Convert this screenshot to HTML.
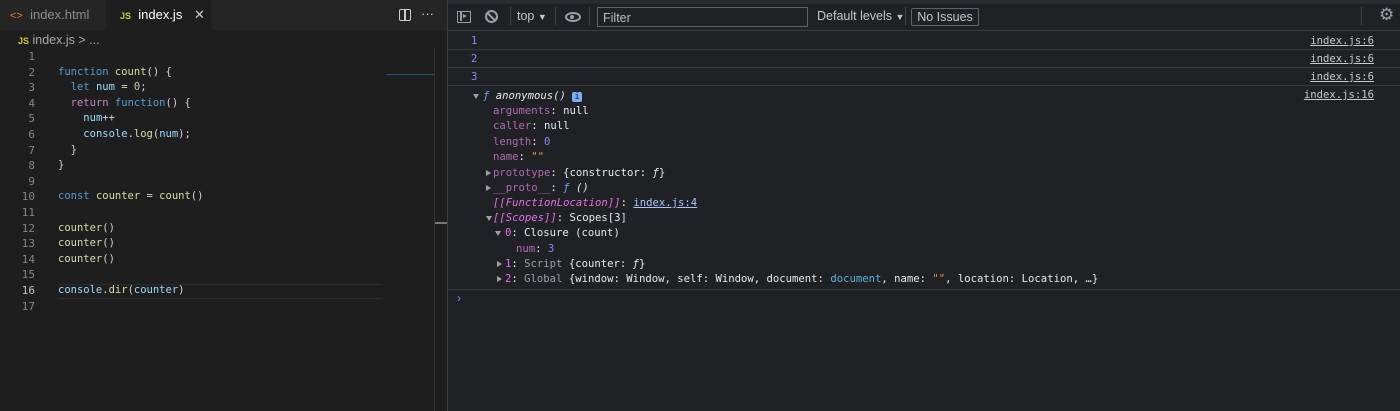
<!DOCTYPE html>
<html><head><style>
*{margin:0;padding:0;box-sizing:border-box}
body{width:1400px;height:411px;overflow:hidden;background:#202124;font-family:"Liberation Sans",sans-serif;position:relative}
.ed{position:absolute;left:0;top:0;width:447px;height:411px;background:#1e1e1e}
.tabs{height:30px;background:#252526;position:relative}
.tab{position:absolute;top:0;height:30px;font-size:13px;line-height:30px;color:#8c8c8c}
.mono{font-family:"DejaVu Sans Mono","Liberation Mono",monospace}
.ln{position:absolute;left:0;width:35px;text-align:right;color:#858585;font-size:11px}
.code{position:absolute;left:58px;font-size:10.5px;color:#d4d4d4;white-space:pre}
.k{color:#569cd6}.f{color:#dcdcaa}.v{color:#9cdcfe}.n{color:#b5cea8}.r{color:#c586c0}
.dt{position:absolute;left:447px;top:0;width:953px;height:411px;background:#202124;border-left:1px solid #3c3c3c}
.tb{height:31px;border-bottom:1px solid #3c3c3c;border-top:4px solid #2a2b2e;position:relative;color:#c7c7c7;font-size:12.5px}
.r2{position:absolute;height:15px;line-height:15px;font-size:10.6px;color:#e8eaed;white-space:pre;font-family:"DejaVu Sans Mono","Liberation Mono",monospace}
.sep{position:absolute;left:0;width:953px;height:1px;background:#3a3b3e}
.lk{position:absolute;right:26px;color:#c9cacc;text-decoration:underline;font-size:10.6px;line-height:15px}
.p{color:#b06bb4}.num{color:#9980ff}.pk{color:#e36eec;font-style:italic}.gr{color:#9aa0a6}
.t{position:absolute;width:0;height:0}
.td{border-left:3.5px solid transparent;border-right:3.5px solid transparent;border-top:5px solid #a0a0a0}
.tr{border-top:3.5px solid transparent;border-bottom:3.5px solid transparent;border-left:5px solid #a0a0a0}
</style></head><body>
<div class="ed">
 <div class="tabs">
  <div class="tab" style="left:0;width:106px;padding-left:10px"><span style="color:#e37933;font-size:11px">&lt;&gt;</span>&nbsp; index.html</div>
  <div class="tab" style="left:106px;width:105px;background:#1e1e1e;color:#fff;padding-left:14px"><span style="color:#cbcb41;font-size:9px;font-weight:bold">JS</span>&nbsp; index.js <span style="position:absolute;left:88px;color:#ccc">✕</span></div>
  <div style="position:absolute;left:399px;top:9px;width:12px;height:12px;border:1.5px solid #ccc;border-radius:2px"><div style="position:absolute;left:4px;top:0;width:1.5px;height:10px;background:#ccc"></div></div>
  <div style="position:absolute;left:421px;top:6px;color:#ccc;font-size:13px">···</div>
 </div>
 <div style="position:absolute;left:18px;top:33px;font-size:12.5px;color:#a9a9a9"><span style="color:#cbcb41;font-size:9px;font-weight:bold">JS</span> index.js &gt; ...</div>
 <div style="position:absolute;left:58px;top:284px;width:324px;height:15px;border-top:1px solid #2c2c2c;border-bottom:1px solid #2c2c2c"></div>
 <div style="position:absolute;left:434px;top:48px;width:1px;height:363px;background:#333"></div>
 <div style="position:absolute;left:435px;top:222px;width:12px;height:2px;background:#777"></div>
 <div style="position:absolute;left:386px;top:74px;width:48px;height:1px;background:#264f78"></div>
 <div class="mono">
  <div class="ln" style="top:49px;line-height:15.6px">1<br>2<br>3<br>4<br>5<br>6<br>7<br>8<br>9<br>10<br>11<br>12<br>13<br>14<br>15<br><span style="color:#c6c6c6">16</span><br>17</div>
  <div class="code" style="top:49px;line-height:15.6px">
<span class="k">function</span> <span class="f">count</span>() {
  <span class="k">let</span> <span class="v">num</span> = <span class="n">0</span>;
  <span class="r">return</span> <span class="k">function</span>() {
    <span class="v">num</span>++
    <span class="v">console</span>.<span class="f">log</span>(<span class="v">num</span>);
  }
}

<span class="k">const</span> <span class="f">counter</span> = <span class="f">count</span>()

<span class="f">counter</span>()
<span class="f">counter</span>()
<span class="f">counter</span>()

<span class="v">console</span>.<span class="f">dir</span>(<span class="v">counter</span>)</div>
 </div>
</div>
<div class="dt">
 <div class="tb">
  <div style="position:absolute;left:9px;top:7px;width:14px;height:12px;border:1.5px solid #9aa0a6"><div style="position:absolute;left:2px;top:0;width:1.5px;height:9px;background:#9aa0a6"></div><div style="position:absolute;left:5px;top:2px;border-left:4px solid #9aa0a6;border-top:2.5px solid transparent;border-bottom:2.5px solid transparent"></div></div>
  <div style="position:absolute;left:37px;top:6px;width:13px;height:13px;border:2px solid #9aa0a6;border-radius:50%"><div style="position:absolute;left:3px;top:-1px;width:2px;height:11px;background:#9aa0a6;transform:rotate(-45deg)"></div></div>
  <div style="position:absolute;left:62px;top:3px;width:1px;height:18px;background:#444"></div>
  <div style="position:absolute;left:69px;top:5px">top <span style="font-size:9px">▼</span></div>
  <div style="position:absolute;left:107px;top:3px;width:1px;height:18px;background:#444"></div>
  <div style="position:absolute;left:117px;top:8px;width:16px;height:10px;border:2px solid #9aa0a6;border-radius:50%"><div style="position:absolute;left:3px;top:1px;width:4px;height:4px;background:#9aa0a6;border-radius:50%"></div></div>
  <div style="position:absolute;left:141px;top:3px;width:1px;height:18px;background:#444"></div>
  <div style="position:absolute;left:149px;top:3px;width:211px;height:20px;border:1px solid #5f6368;background:#202124;padding:3px 5px;color:#bdbdbd">Filter</div>
  <div style="position:absolute;left:369px;top:5px">Default levels <span style="font-size:9px">▼</span></div>
  <div style="position:absolute;left:457px;top:3px;width:1px;height:18px;background:#444"></div>
  <div style="position:absolute;left:463px;top:4px;width:68px;height:18px;border:1px solid #5f6368;border-radius:2px;text-align:center;line-height:16px">No Issues</div>
  <div style="position:absolute;left:913px;top:3px;width:1px;height:18px;background:#444"></div>
  <div style="position:absolute;left:931px;top:1px;font-size:17px;color:#9aa0a6">⚙</div>
 </div>
 <div class="r2 num" style="top:34px;left:23px">1</div><span class="lk mono" style="top:34px">index.js:6</span>
 <div class="sep" style="top:49px"></div>
 <div class="r2 num" style="top:52px;left:23px">2</div><span class="lk mono" style="top:52px">index.js:6</span>
 <div class="sep" style="top:67px"></div>
 <div class="r2 num" style="top:70px;left:23px">3</div><span class="lk mono" style="top:70px">index.js:6</span>
 <div class="sep" style="top:85px"></div>
 <span class="lk mono" style="top:88px">index.js:16</span>

 <div class="t td" style="left:25px;top:94px"></div>
 <div class="r2" style="left:35px;top:89px"><span style="color:#7b9cff;font-style:italic">ƒ</span> <i>anonymous()</i> <span style="background:#7cacf8;color:#202124;font-size:9px;padding:0 2px;border-radius:2px">i</span></div>
 <div class="r2" style="left:45px;top:104px"><span class="p">arguments</span>: null</div>
 <div class="r2" style="left:45px;top:119px"><span class="p">caller</span>: null</div>
 <div class="r2" style="left:45px;top:135px"><span class="p">length</span>: <span class="num">0</span></div>
 <div class="r2" style="left:45px;top:150px"><span class="p">name</span>: <span style="color:#f28b54">""</span></div>
 <div class="t tr" style="left:38px;top:170px"></div>
 <div class="r2" style="left:45px;top:166px"><span class="p">prototype</span>: {constructor: <i>ƒ</i>}</div>
 <div class="t tr" style="left:38px;top:185px"></div>
 <div class="r2" style="left:45px;top:181px"><span class="p">__proto__</span>: <span style="color:#7b9cff;font-style:italic">ƒ</span> <i>()</i></div>
 <div class="r2" style="left:45px;top:196px"><span class="pk">[[FunctionLocation]]</span>: <span style="color:#aac4ff;text-decoration:underline">index.js:4</span></div>
 <div class="t td" style="left:38px;top:216px"></div>
 <div class="r2" style="left:45px;top:211px"><span class="pk">[[Scopes]]</span>: Scopes[3]</div>
 <div class="t td" style="left:47px;top:231px"></div>
 <div class="r2" style="left:57px;top:226px"><span class="pk" style="font-style:normal">0</span>: Closure (count)</div>
 <div class="r2" style="left:68px;top:242px"><span class="p">num</span>: <span class="num">3</span></div>
 <div class="t tr" style="left:49px;top:261px"></div>
 <div class="r2" style="left:57px;top:257px"><span class="pk" style="font-style:normal">1</span>: <span class="gr">Script</span> {counter: <i>ƒ</i>}</div>
 <div class="t tr" style="left:49px;top:276px"></div>
 <div class="r2" style="left:57px;top:272px"><span class="pk" style="font-style:normal">2</span>: <span class="gr">Global</span> {window: Window, self: Window, document: <span style="color:#5db0d7">document</span>, name: <span style="color:#f28b54">""</span>, location: Location, …}</div>
 <div class="sep" style="top:289px"></div>
 <div style="position:absolute;left:9px;top:291px;color:#4e9cff;font-size:12px">›</div>
</div>
</body></html>
